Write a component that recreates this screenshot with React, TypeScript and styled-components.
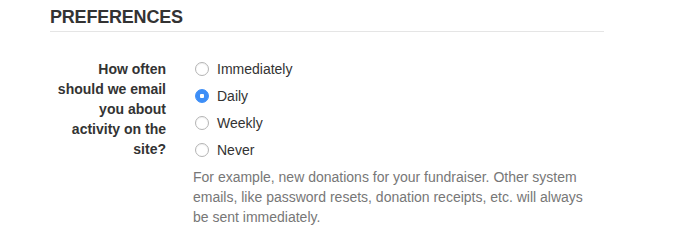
import { useState } from 'react'
import styled, { createGlobalStyle } from 'styled-components'

const GlobalStyle = createGlobalStyle`
  body {
    margin: 0;
    background: #fff;
    font-family: "Liberation Sans", Arial, Helvetica, sans-serif;
    color: #333;
  }
`

const options = ['Immediately', 'Daily', 'Weekly', 'Never']

const App = () => {
  const [frequency, setFrequency] = useState('Daily')

  return (
    <>
      <GlobalStyle />
      <Section>
        <Heading>PREFERENCES</Heading>
        <FormRow>
          <Label>How often should we email you about activity on the site?</Label>
          <Field>
            <RadioList>
              {options.map(opt => (
                <RadioRow key={opt}>
                  <RadioInput
                    type="radio"
                    name="frequency"
                    checked={frequency === opt}
                    onChange={() => setFrequency(opt)}
                  />
                  {opt}
                </RadioRow>
              ))}
            </RadioList>
            <Help>
              For example, new donations for your fundraiser. Other system emails, like password
              resets, donation receipts, etc. will always be sent immediately.
            </Help>
          </Field>
        </FormRow>
      </Section>
    </>
  )
}

export default App

const Section = styled.div`
  width: 554px;
  margin-left: 50px;
  padding-top: 7px;
`

const Heading = styled.h2`
  margin: 0;
  font-size: 18px;
  line-height: 20px;
  font-weight: bold;
  color: #333;
  letter-spacing: -0.2px;
  padding-bottom: 4px;
  border-bottom: 1px solid #e5e5e5;
`

const FormRow = styled.div`
  display: grid;
  grid-template-columns: 116px 1fr;
  column-gap: 27px;
  margin-top: 27px;
`

const Label = styled.div`
  padding-left: 4px;
  text-align: right;
  font-size: 14px;
  line-height: 20px;
  font-weight: bold;
  color: #333;
`

const Field = styled.div`
  display: flex;
  flex-direction: column;
  gap: 7px;
`

const RadioList = styled.div`
  display: flex;
  flex-direction: column;
  gap: 7px;
`

const RadioRow = styled.label`
  display: flex;
  align-items: center;
  gap: 8px;
  font-size: 14px;
  line-height: 20px;
  color: #333;
  cursor: pointer;
`

const RadioInput = styled.input`
  appearance: none;
  margin: 0 0 0 2px;
  width: 14px;
  height: 14px;
  border-radius: 50%;
  border: 1px solid #b4b4b4;
  background: #fff;
  box-shadow: inset 0 1px 1px rgba(0, 0, 0, 0.06);
  cursor: pointer;
  flex-shrink: 0;

  &:checked {
    border-color: #3d8ef7;
    background: radial-gradient(circle, #fff 0 2px, #3d8ef7 2.5px);
    box-shadow: none;
  }
`

const Help = styled.p`
  margin: 0;
  max-width: 400px;
  font-size: 14px;
  line-height: 20px;
  color: #777;
`
